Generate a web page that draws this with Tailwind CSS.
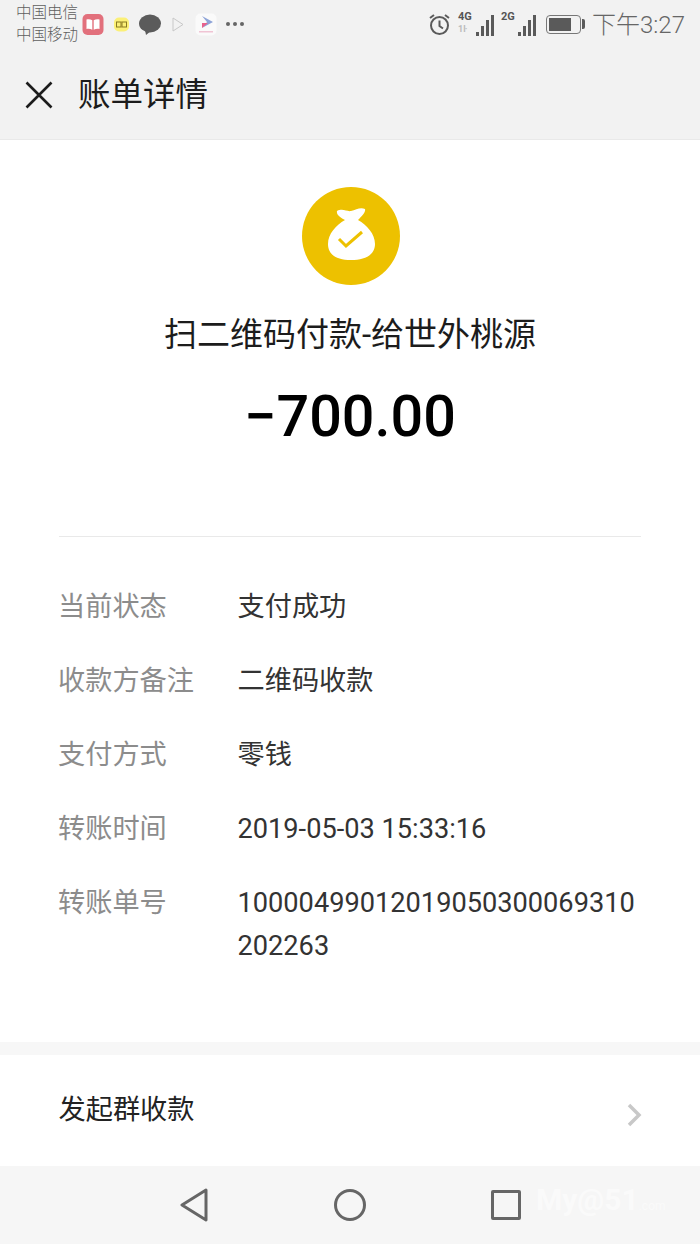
<!DOCTYPE html>
<html lang="zh-CN">
<head>
  <meta charset="UTF-8">
  <meta name="viewport" content="width=device-width, initial-scale=1.0">
  <title>账单详情</title>
  <script src="https://cdn.jsdelivr.net/npm/@tailwindcss/browser@4"></script>
</head>
<body class="bg-white font-['Roboto','Noto_Sans_CJK_SC',sans-serif] text-[#222]">
  <div class="flex flex-col w-[700px] h-[1244px] overflow-hidden">

    <!-- 顶部 -->
    <div class="h-[140px] shrink-0 bg-[#f2f2f2] border-b border-[#e9e9e9]">
      <div class="h-[48px] flex items-center pl-[16px] pr-[15px] text-[#555]">
        <div class="w-[65px] text-[15.500px] leading-[22px] text-[#5f5f5f] font-light whitespace-nowrap">
          <div>中国电信</div>
          <div>中国移动</div>
        </div>
        <div class="flex items-center ml-[1px]">
          <svg width="22" height="23" viewBox="0 0 22 23"><rect x="0.500" y="1" width="21" height="21" rx="5" fill="#e2707c"/><path d="M4.500 6.500c2-.6 4-.4 5.800.8v9.500c-1.800-1-3.800-1.200-5.800-.8zM17.500 6.500c-2-.6-4-.4-5.800.8v9.500c1.800-1 3.800-1.200 5.800-.8z" fill="#fff"/></svg>
          <svg class="ml-[9px]" width="17" height="17" viewBox="0 0 17 17"><rect x="1" y="1.500" width="15" height="14" rx="5" fill="#fbf078"/><rect x="3.500" y="6" width="4.500" height="5" fill="none" stroke="#8a7a20" stroke-width="1"/><rect x="9" y="6" width="4.500" height="5" fill="none" stroke="#8a7a20" stroke-width="1"/></svg>
          <svg class="ml-[8px]" width="24" height="23" viewBox="0 0 24 23"><ellipse cx="12" cy="10.500" rx="11" ry="9" fill="#5b5b5b"/><path d="M7 17l1 5 5-4z" fill="#5b5b5b"/></svg>
          <svg class="ml-[9px]" width="14" height="17" viewBox="0 0 14 17"><path d="M2 2l10 6.500L2 15z" fill="none" stroke="#c8c8c8" stroke-width="1"/></svg>
          <svg class="ml-[10px]" width="22" height="23" viewBox="0 0 22 23"><rect x="0.500" y="0.500" width="21" height="22" rx="5" fill="#fafafa"/><path d="M7 3l11 6-11 6 5-6z" fill="#8ea4d8"/><path d="M7 10l6 0-6 5z" fill="#e8618c"/><rect x="4" y="18" width="14" height="1.500" fill="#f0c4d4"/></svg>
          <div class="flex gap-[3px] ml-[9px]">
            <span class="w-[4px] h-[4px] rounded-full bg-[#666]"></span>
            <span class="w-[4px] h-[4px] rounded-full bg-[#666]"></span>
            <span class="w-[4px] h-[4px] rounded-full bg-[#666]"></span>
          </div>
        </div>
        <div class="ml-auto flex items-center">
          <svg width="23" height="23" viewBox="0 0 23 23" fill="none" stroke="#5a5a5a"><circle cx="11.500" cy="12.500" r="8.500" stroke-width="2"/><path d="M11.500 7.500v5.500l3.500 2.500" stroke-width="2"/><path d="M2 5l4-3M21 5l-4-3" stroke-width="2"/></svg>
          <div class="relative w-[36px] h-[24px] ml-[7px]">
            <span class="absolute left-0 top-[-1px] text-[11px] leading-[12px] font-bold text-[#555]">4G</span>
            <span class="absolute left-0 top-[12px] text-[9px] leading-[10px] font-bold text-[#bbb]">1ŀ</span>
            <div class="absolute right-0 bottom-0 flex items-end gap-[2px]">
              <span class="w-[3px] h-[4px] bg-[#5a5a5a]"></span>
              <span class="w-[3px] h-[10px] bg-[#5a5a5a]"></span>
              <span class="w-[3px] h-[16px] bg-[#5a5a5a]"></span>
              <span class="w-[3px] h-[21px] bg-[#5a5a5a]"></span>
            </div>
          </div>
          <div class="relative w-[35px] h-[24px] ml-[7px]">
            <span class="absolute left-0 top-[-1px] text-[11px] leading-[12px] font-bold text-[#555]">2G</span>
            <div class="absolute right-0 bottom-0 flex items-end gap-[2px]">
              <span class="w-[3px] h-[4px] bg-[#5a5a5a]"></span>
              <span class="w-[3px] h-[10px] bg-[#5a5a5a]"></span>
              <span class="w-[3px] h-[16px] bg-[#5a5a5a]"></span>
              <span class="w-[3px] h-[21px] bg-[#5a5a5a]"></span>
            </div>
          </div>
          <div class="flex items-center ml-[10px]">
            <div class="w-[35px] h-[19px] border border-[#777] rounded-[4px] p-[2px]">
              <div class="w-[22px] h-full bg-[#5a5a5a]"></div>
            </div>
            <span class="w-[3px] h-[10px] ml-[1px] bg-[#5a5a5a] rounded-r-[2px]"></span>
          </div>
          <span class="ml-[7px] mt-[2px] text-[24px] leading-[28px] text-[#666] font-light">下午3:27</span>
        </div>
      </div>
      <div class="h-[92px] flex items-center pl-[25px] pt-[2px]">
        <svg width="28" height="28" viewBox="0 0 28 28" fill="none" stroke="#1c1c1c" stroke-width="2.600"><path d="M1.500 1.500l25 25M26.500 1.500l-25 25"/></svg>
        <h1 class="ml-[25px] text-[32.500px] leading-[40px] text-[#1c1c1c] font-normal whitespace-nowrap">账单详情</h1>
      </div>
    </div>

    <!-- 账单内容 -->
    <div class="flex-1 flex flex-col">
      <div class="flex flex-col items-center pt-[47px]">
        <svg class="ml-[2px]" width="98" height="98" viewBox="0 0 98 98">
          <circle cx="49" cy="49" r="49" fill="#edc100"/>
          <path d="M35 24c6-3 10 1 14 0 5-1 9-4 14-2 1 3-3 7-7 11 9 5 17 14 17 24 0 11-10 16-24 16S26 68 26 57c0-10 8-19 17-24-4-2-9-5-8-9z" fill="#fff"/>
          <path d="M37 52l7 7 16-14" fill="none" stroke="#edc100" stroke-width="3"/>
        </svg>
        <div class="mt-[26px] text-[33px] leading-[48px] text-[#1c1c1c] whitespace-nowrap">扫二维码付款-给世外桃源</div>
        <div class="mt-[22px] text-[57.500px] leading-[72px] font-medium text-black">−700.00</div>
      </div>

      <div class="mt-[83px] mx-[59px] border-t border-[#e9e9e9] pt-[49px] text-[27.200px] leading-[43px]">
        <div class="ml-[-1px] grid grid-cols-[179.500px_1fr] gap-y-[31px]">
          <div class="text-[#8c8c8c]">当前状态</div>
          <div class="text-[#333]">支付成功</div>
          <div class="text-[#8c8c8c]">收款方备注</div>
          <div class="text-[#333]">二维码收款</div>
          <div class="text-[#8c8c8c]">支付方式</div>
          <div class="text-[#333]">零钱</div>
          <div class="text-[#8c8c8c]">转账时间</div>
          <div class="text-[#333]">2019-05-03 15:33:16</div>
          <div class="text-[#8c8c8c]">转账单号</div>
          <div class="text-[#333] break-all">10000499012019050300069310202263</div>
        </div>
      </div>

      <div class="mt-auto h-[13px] bg-[#f7f7f7]"></div>
      <div class="h-[111px] flex items-center justify-between pl-[58.500px] pr-[58px]">
        <span class="text-[27.200px] text-[#222]">发起群收款</span>
        <svg class="mt-[8px]" width="16" height="24" viewBox="0 0 16 24" fill="none" stroke="#c8c8c8" stroke-width="3.500"><path d="M3 2l10 10-10 10"/></svg>
      </div>
    </div>

    <!-- 底部导航 -->
    <div class="relative h-[78px] shrink-0 bg-[#f6f6f6] flex items-center">
      <svg class="ml-[179px]" width="30" height="34" viewBox="0 0 30 34" fill="none" stroke="#666" stroke-width="3" stroke-linejoin="round"><path d="M27 2L3 17l24 15z"/></svg>
      <svg class="ml-[125px]" width="32" height="32" viewBox="0 0 32 32" fill="none" stroke="#666" stroke-width="3"><circle cx="16" cy="16" r="14.500"/></svg>
      <div class="ml-[125px] w-[30px] h-[30px] border-[3px] border-[#666] rounded-[2px]"></div>
      <!-- 水印 -->
      <div class="absolute left-[536px] top-[17px] text-white/50 text-[30px] leading-[34px] font-bold">My@51<span class="text-[12px] font-normal">.com</span></div>
    </div>
  </div>
</body>
</html>
